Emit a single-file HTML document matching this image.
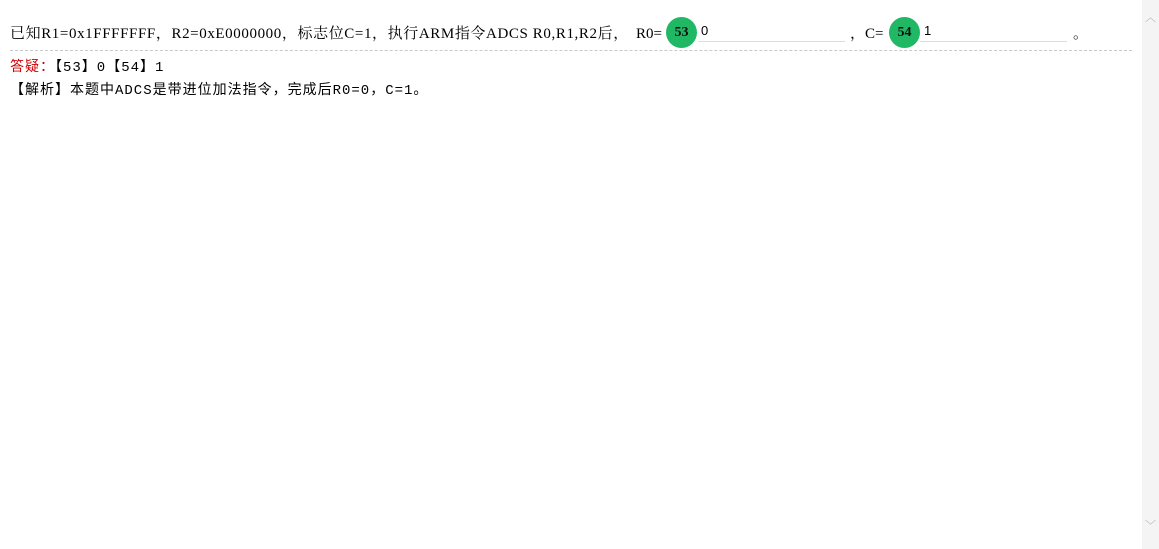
<!DOCTYPE html><html><head><meta charset="utf-8"><style>
body{margin:0;width:1159px;height:549px;background:#fff;position:relative;overflow:hidden;font-family:"Liberation Serif","Noto Serif CJK SC",serif;font-size:15px;color:#000}
.a{position:absolute;white-space:nowrap;line-height:20px}
.c{position:absolute;width:31px;height:31px;border-radius:50%;background:#21b865;font:bold 14px "Liberation Serif",serif;color:#111;text-align:center;line-height:31px}
.u{position:absolute;height:1px;background:#ddd}
.sb{position:absolute;right:0;top:0;width:17px;height:549px;background:#f4f4f4}
.m{font-family:"Liberation Mono","Noto Sans CJK SC",monospace;font-size:14px;letter-spacing:1px}
</style></head><body>
<div class="a" style="left:10px;top:24px;letter-spacing:0.6px">已知R1=0x1FFFFFFF，R2=0xE0000000，标志位C=1，执行ARM指令ADCS R0,R1,R2后，</div>
<div class="a" style="left:636px;top:24px">R0=</div>
<div class="c" style="left:666px;top:17px">53</div>
<div class="a" style="left:701px;top:23px;font:13px 'Liberation Sans',sans-serif">0</div>
<div class="u" style="left:698px;top:41px;width:147px"></div>
<div class="a" style="left:850px;top:24px">，C=</div>
<div class="c" style="left:889px;top:17px">54</div>
<div class="a" style="left:924px;top:23px;font:13px 'Liberation Sans',sans-serif">1</div>
<div class="u" style="left:920px;top:41px;width:147px"></div>
<div class="a" style="left:1073px;top:24px">。</div>
<div class="a" style="left:10px;top:50px;width:1122px;border-top:1px dashed #c8c8c8"></div>
<div class="a m" style="left:10px;top:58px"><span style="color:#c00">答疑：</span>【53】0【54】1</div>
<div class="a m" style="left:10px;top:81px">【解析】本题中ADCS是带进位加法指令，完成后R0=0，C=1。</div>
<div class="sb"><div class="a" style="left:3px;top:8px;color:#aaa;font-size:11px">︿</div><div class="a" style="left:3px;top:516px;color:#aaa;font-size:11px">﹀</div></div>
</body></html>
